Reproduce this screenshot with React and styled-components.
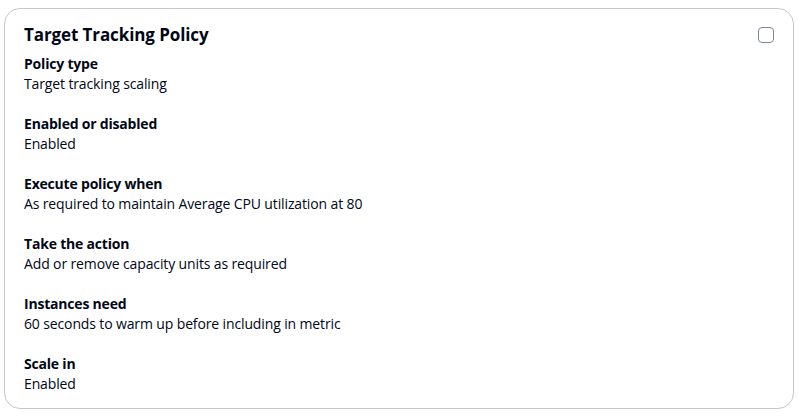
import React, { useState } from 'react';
import styled, { createGlobalStyle } from 'styled-components';

const GlobalStyle = createGlobalStyle`
  body {
    margin: 0;
    font-family: "Open Sans", "Noto Sans", sans-serif;
    color: #000716;
    background: #fff;
  }
`;

const items = [
  { label: 'Policy type', value: 'Target tracking scaling' },
  { label: 'Enabled or disabled', value: 'Enabled' },
  { label: 'Execute policy when', value: 'As required to maintain Average CPU utilization at 80' },
  { label: 'Take the action', value: 'Add or remove capacity units as required' },
  { label: 'Instances need', value: '60 seconds to warm up before including in metric' },
  { label: 'Scale in', value: 'Enabled' },
];

const App = () => {
  const [checked, setChecked] = useState(false);

  return (
    <>
      <GlobalStyle />
      <Page>
        <Card>
          <Header>
            <Title>Target Tracking Policy</Title>
            <Checkbox
              type="checkbox"
              checked={checked}
              onChange={(e) => setChecked(e.target.checked)}
            />
          </Header>
          <List>
            {items.map((item) => (
              <Item key={item.label}>
                <Label>{item.label}</Label>
                <Value>{item.value}</Value>
              </Item>
            ))}
          </List>
        </Card>
      </Page>
    </>
  );
};

const Page = styled.div`
  padding: 8px 5px 6px 4px;
`;

const Card = styled.section`
  border: 1px solid #c6c6cd;
  border-radius: 16px;
  padding: 14px 19px 14px 19px;
  background: #fff;
`;

const Header = styled.div`
  display: flex;
  align-items: center;
  justify-content: space-between;
  height: 24px;
  margin-bottom: 7px;
`;

const Title = styled.h2`
  margin: 0;
  font-size: 17px;
  font-weight: 700;
  line-height: 24px;
  letter-spacing: -0.1px;
`;

const Checkbox = styled.input`
  appearance: none;
  width: 16px;
  height: 16px;
  margin: 0;
  border: 1px solid #7d8998;
  border-radius: 4px;
  background: #fff;
  &:checked {
    background: #0972d3;
    border-color: #0972d3;
  }
`;

const List = styled.div`
  display: flex;
  flex-direction: column;
  gap: 20px;
`;

const Item = styled.div`
  display: flex;
  flex-direction: column;
`;

const Label = styled.div`
  font-size: 14px;
  font-weight: 700;
  line-height: 20px;
  letter-spacing: -0.2px;
`;

const Value = styled.div`
  font-size: 14px;
  line-height: 20px;
  letter-spacing: -0.13px;
`;

export default App;
